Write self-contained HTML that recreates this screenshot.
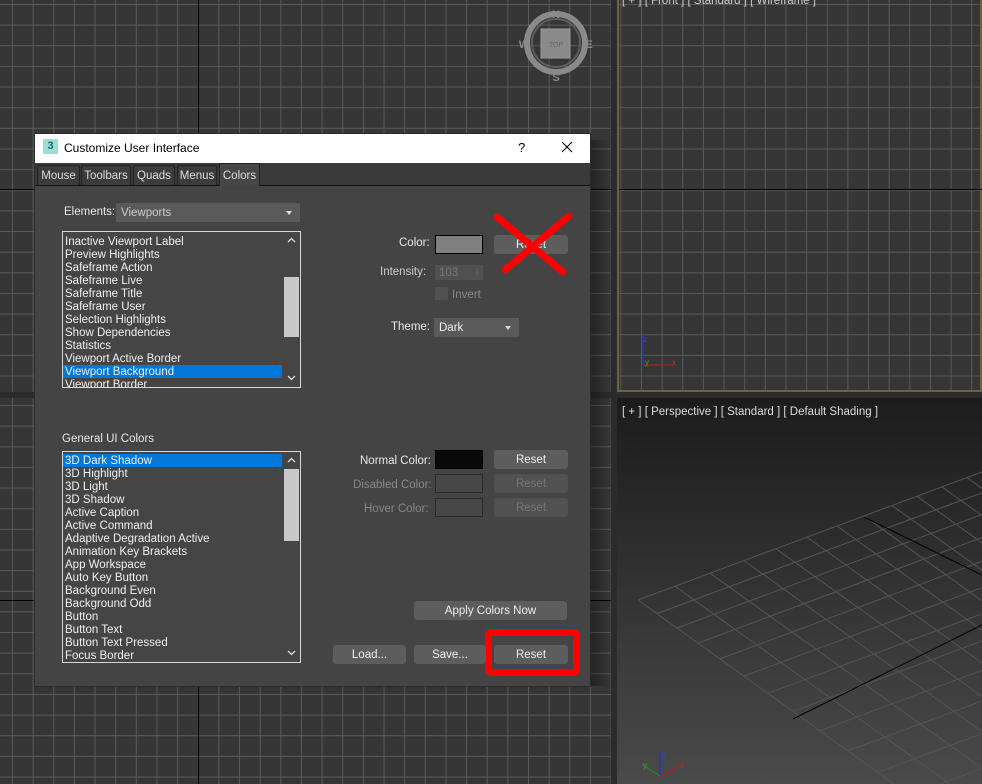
<!DOCTYPE html>
<html><head><meta charset="utf-8"><style>
*{margin:0;padding:0;box-sizing:border-box}
body{width:982px;height:784px;overflow:hidden;background:#2b2b2b;font-family:"Liberation Sans",sans-serif;font-size:11.5px;color:#e8e8e8;position:relative}
.abs{position:absolute}
.grid{background-color:#363636;background-image:linear-gradient(to right,#5a5a5a 1px,transparent 1px),linear-gradient(to bottom,#5a5a5a 1px,transparent 1px);background-size:20.65px 20.65px}
.lbl{position:absolute;white-space:nowrap}
.btn{position:absolute;background:#5d5d5d;border-radius:3px;text-align:center;color:#eee;line-height:21px;height:19px}
.btn.dis{background:#515151;color:#777}
.sw{position:absolute;width:48px;height:19px;border:1px solid #000}
.list{position:absolute;background:#454545;border:1px solid #d8d8d8;overflow:hidden}
.list div{height:13px;line-height:14px;padding-left:2px;color:#f0f0f0;white-space:nowrap}
.list .sel{background:#0078d7;margin-right:18px}
.sb{position:absolute;right:0;top:0;bottom:0;width:17px;background:#454545}
.tab{position:absolute;top:165px;height:20px;background:#3c3c3c;border:1px solid #222;border-bottom:none;line-height:21px;text-align:center;color:#ddd;border-radius:2px 2px 0 0}
.dd{position:absolute;background:#5a5a5a;height:19px;line-height:21px;padding-left:5px;color:#ccc}
.dd:after{content:"";position:absolute;right:8px;top:8px;border-left:3.5px solid transparent;border-right:3.5px solid transparent;border-top:4px solid #ddd}
</style></head><body>
<div class="abs grid" style="left:0;top:0;width:611px;height:392px;background-position:12px 4px"></div>
<div class="abs" style="left:198px;top:0;width:1px;height:392px;background:#000"></div>
<div class="abs" style="left:0;top:189px;width:611px;height:1px;background:#000"></div>
<div class="abs grid" style="left:0;top:398px;width:611px;height:386px;background-position:12px 7px"></div>
<div class="abs" style="left:198px;top:398px;width:1px;height:386px;background:#000"></div>
<div class="abs" style="left:0;top:600px;width:611px;height:1px;background:#000"></div>
<svg class="abs" style="left:515px;top:5px" width="85" height="80">
<circle cx="41" cy="38" r="29" fill="none" stroke="#8a8a8a" stroke-width="6"/>
<circle cx="41" cy="38" r="24" fill="none" stroke="#5e5e5e" stroke-width="2"/>
<rect x="26" y="24" width="29" height="29" fill="#8a8a8a" stroke="#9a9a9a"/>
<text x="41" y="42" font-size="7" fill="#666" text-anchor="middle" font-family="Liberation Sans">TOP</text>
<text x="41" y="13" font-size="11" font-weight="bold" fill="#8a8a8a" text-anchor="middle" font-family="Liberation Sans">N</text>
<text x="41" y="76" font-size="11" font-weight="bold" fill="#8a8a8a" text-anchor="middle" font-family="Liberation Sans">S</text>
<text x="9" y="43" font-size="11" font-weight="bold" fill="#8a8a8a" text-anchor="middle" font-family="Liberation Sans">W</text>
<text x="74" y="43" font-size="11" font-weight="bold" fill="#8a8a8a" text-anchor="middle" font-family="Liberation Sans">E</text>
</svg>
<div class="abs grid" style="left:617px;top:0;width:365px;height:392px;background-position:22px 4px;border:2px solid #6e6340;border-top:none"></div>
<div class="abs" style="left:619px;top:189px;width:363px;height:1px;background:#000"></div>
<div class="lbl" style="left:622px;top:-5px;color:#ccc">[ + ] [ Front ] [ Standard ] [ Wireframe ]</div>
<svg class="abs" style="left:638px;top:332px" width="45" height="40">
<line x1="5" y1="4" x2="5" y2="33" stroke="#2233cc" stroke-width="1.2"/>
<line x1="5" y1="33" x2="36" y2="33" stroke="#aa2222" stroke-width="1.2"/>
<text x="5" y="10" font-size="8" fill="#3344dd" font-family="Liberation Sans">z</text>
<text x="7" y="33" font-size="8" fill="#33aa33" font-family="Liberation Sans">y</text>
<text x="34" y="33" font-size="8" fill="#bb3333" font-family="Liberation Sans">x</text>
</svg>
<div class="abs" style="left:617px;top:398px;width:365px;height:386px;background:linear-gradient(#1c1c1c,#4a4a4a)"></div>
<svg class="abs" style="left:0;top:0" width="982" height="784">
<g stroke="#555" stroke-width="1">
<line x1="638" y1="600" x2="982" y2="472"/><line x1="657" y1="613.6" x2="982" y2="492.7"/><line x1="677" y1="628" x2="982" y2="514.5"/><line x1="698" y1="643.1" x2="982" y2="537.5"/><line x1="720" y1="658.9" x2="982" y2="561.4"/><line x1="744" y1="676.1" x2="982" y2="587.6"/><line x1="768" y1="693.3" x2="982" y2="613.7"/><line x1="793" y1="711.3" x2="982" y2="641"/><line x1="820" y1="730.7" x2="982" y2="670.4"/><line x1="848" y1="750.8" x2="982" y2="701"/><line x1="878" y1="772.3" x2="982" y2="733.6"/><line x1="910" y1="795.3" x2="982" y2="768.5"/>
<line x1="638" y1="600" x2="894" y2="784"/><line x1="675" y1="586.2" x2="950" y2="784"/><line x1="710" y1="573.2" x2="1004" y2="784"/><line x1="744" y1="560.6" x2="1055" y2="784"/><line x1="776" y1="548.7" x2="1086" y2="771"/><line x1="807" y1="537.1" x2="1117" y2="760"/><line x1="837" y1="526" x2="1147" y2="749"/><line x1="864" y1="515.9" x2="1174" y2="739"/><line x1="892" y1="505.5" x2="1202" y2="728"/><line x1="917" y1="496.2" x2="1227" y2="719"/><line x1="942" y1="486.9" x2="1252" y2="710"/><line x1="967" y1="477.6" x2="1277" y2="700"/>
</g>
<line x1="864" y1="517" x2="982" y2="575" stroke="#000"/>
<line x1="793" y1="719" x2="982" y2="625" stroke="#000"/>
<line x1="660" y1="752" x2="660" y2="776" stroke="#2233cc" stroke-width="1.3"/>
<line x1="660" y1="776" x2="682" y2="765" stroke="#aa2222" stroke-width="1.3"/>
<line x1="660" y1="776" x2="646" y2="767" stroke="#228822" stroke-width="1.3"/>
<text x="662" y="758" font-size="8" fill="#3344dd" font-family="Liberation Sans">z</text>
<text x="680" y="768" font-size="8" fill="#bb3333" font-family="Liberation Sans">x</text>
<text x="643" y="768" font-size="8" fill="#33aa33" font-family="Liberation Sans">y</text>
</svg>
<div class="lbl" style="left:622px;top:406px;color:#ddd">[ + ] [ Perspective ] [ Standard ] [ Default Shading ]</div>
<div class="abs" style="left:590px;top:140px;width:21px;height:546px;background:linear-gradient(to right,rgba(0,0,0,.35),rgba(0,0,0,0))"></div>
<div class="abs" style="left:34px;top:133px;width:557px;height:554px;background:#444;border:1px solid #2a2a2a"></div>
<div class="abs" style="left:35px;top:134px;width:555px;height:29px;background:#fff"></div>
<div class="abs" style="left:43px;top:139px;width:15px;height:15px;background:#9fdcd8;color:#1a6a6a;font-weight:bold;font-size:11px;text-align:center;line-height:15px">3</div>
<div class="lbl" style="left:64px;top:141px;color:#000;font-size:12px">Customize User Interface</div>
<div class="lbl" style="left:518px;top:140px;color:#000;font-size:13px">?</div>
<svg class="abs" style="left:561px;top:141px" width="12" height="12"><path d="M1 1L11 11M11 1L1 11" stroke="#000" stroke-width="1.1"/></svg>
<div class="abs" style="left:35px;top:163px;width:555px;height:23px;background:#3a3a3a"></div>
<div class="abs" style="left:35px;top:185px;width:555px;height:1px;background:#111"></div>
<div class="tab" style="left:37px;width:43px">Mouse</div>
<div class="tab" style="left:81px;width:50px">Toolbars</div>
<div class="tab" style="left:133px;width:42px">Quads</div>
<div class="tab" style="left:177px;width:40px">Menus</div>
<div class="tab" style="left:219px;width:41px;top:163px;height:23px;background:#464646;line-height:24px">Colors</div>
<div class="lbl" style="left:64px;top:206px">Elements:</div>
<div class="dd" style="left:116px;top:203px;width:184px">Viewports</div>
<div class="list" style="left:62px;top:231px;width:239px;height:157px;padding-top:3px">
<div>Inactive Viewport Label</div><div>Preview Highlights</div><div>Safeframe Action</div><div>Safeframe Live</div><div>Safeframe Title</div><div>Safeframe User</div><div>Selection Highlights</div><div>Show Dependencies</div><div>Statistics</div><div>Viewport Active Border</div><div class="sel">Viewport Background</div><div>Viewport Border</div>
<span class="sb"><span class="abs" style="left:1px;top:45px;width:15px;height:60px;background:#c8c8c8"></span><svg class="abs" style="left:4px;top:5px" width="9" height="6"><path d="M1 5L4.5 1.5L8 5" stroke="#ddd" fill="none" stroke-width="1.3"/></svg><svg class="abs" style="left:4px;top:143px" width="9" height="6"><path d="M1 1L4.5 4.5L8 1" stroke="#ddd" fill="none" stroke-width="1.3"/></svg></span>
</div>
<div class="lbl" style="left:399px;top:237px">Color:</div>
<div class="sw" style="left:435px;top:235px;background:#808080"></div>
<div class="btn" style="left:494px;top:235px;width:74px">Reset</div>
<div class="lbl" style="left:380px;top:266px;color:#ccc">Intensity:</div>
<div class="abs" style="left:435px;top:265px;width:48px;height:15px;background:#515151;color:#777;padding-left:4px;line-height:16px">103<span style="position:absolute;right:4px;font-size:7px">&#8597;</span></div>
<div class="abs" style="left:435px;top:287px;width:13px;height:13px;background:#515151"></div>
<div class="lbl" style="left:452px;top:289px;color:#888">Invert</div>
<div class="lbl" style="left:391px;top:321px">Theme:</div>
<div class="dd" style="left:434px;top:318px;width:85px;color:#eee">Dark</div>
<svg class="abs" style="left:0;top:0" width="600" height="700">
<path d="M497 217L563 272M569 216L505 270" stroke="#ff0000" stroke-width="7" stroke-linecap="round" fill="none"/>
<rect x="488.5" y="632.5" width="88" height="40" rx="3" fill="none" stroke="#ff0000" stroke-width="7"/>
</svg>
<div class="lbl" style="left:62px;top:433px">General UI Colors</div>
<div class="list" style="left:62px;top:451px;width:239px;height:212px;padding-top:2px">
<div class="sel">3D Dark Shadow</div><div>3D Highlight</div><div>3D Light</div><div>3D Shadow</div><div>Active Caption</div><div>Active Command</div><div>Adaptive Degradation Active</div><div>Animation Key Brackets</div><div>App Workspace</div><div>Auto Key Button</div><div>Background Even</div><div>Background Odd</div><div>Button</div><div>Button Text</div><div>Button Text Pressed</div><div>Focus Border</div>
<span class="sb"><span class="abs" style="left:1px;top:17px;width:15px;height:72px;background:#c8c8c8"></span><svg class="abs" style="left:4px;top:5px" width="9" height="6"><path d="M1 5L4.5 1.5L8 5" stroke="#ddd" fill="none" stroke-width="1.3"/></svg><svg class="abs" style="left:4px;top:198px" width="9" height="6"><path d="M1 1L4.5 4.5L8 1" stroke="#ddd" fill="none" stroke-width="1.3"/></svg></span>
</div>
<div class="lbl" style="left:360px;top:455px">Normal Color:</div>
<div class="sw" style="left:435px;top:450px;background:#0a0a0a"></div>
<div class="btn" style="left:494px;top:450px;width:74px">Reset</div>
<div class="lbl" style="left:353px;top:479px;color:#888">Disabled Color:</div>
<div class="sw" style="left:435px;top:474px;background:#474747;border-color:#2a2a2a"></div>
<div class="btn dis" style="left:494px;top:474px;width:74px">Reset</div>
<div class="lbl" style="left:364px;top:503px;color:#888">Hover Color:</div>
<div class="sw" style="left:435px;top:498px;background:#474747;border-color:#2a2a2a"></div>
<div class="btn dis" style="left:494px;top:498px;width:74px">Reset</div>
<div class="btn" style="left:414px;top:601px;width:153px">Apply Colors Now</div>
<div class="btn" style="left:333px;top:645px;width:73px">Load...</div>
<div class="btn" style="left:414px;top:645px;width:72px">Save...</div>
<div class="btn" style="left:494px;top:645px;width:74px">Reset</div>
</body></html>
